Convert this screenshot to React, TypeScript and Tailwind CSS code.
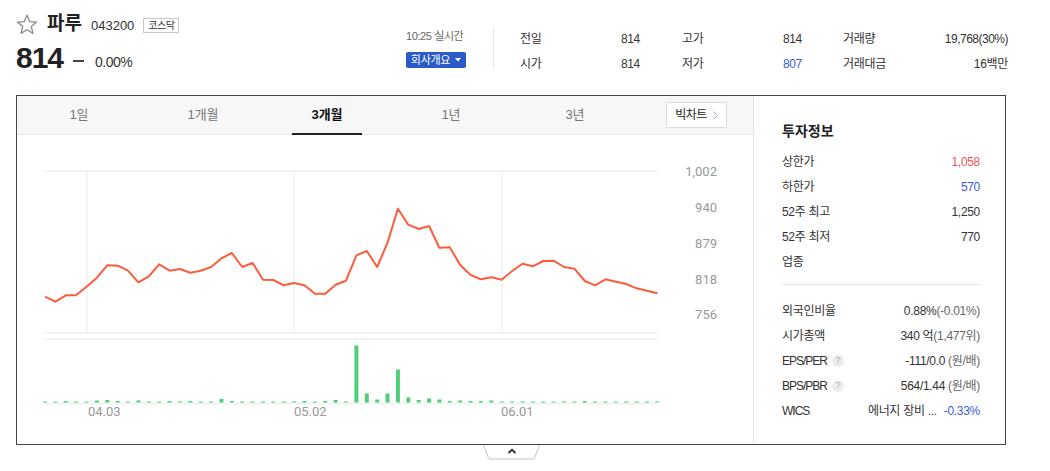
import React from "react";

const PRICE_Y = [296.7,301.7,295.3,295.3,286.7,277.7,265.3,265.7,270.7,282.3,276.3,264.3,270.7,269,272.7,270.7,267,258.3,253,267,263,279.7,280,285.3,283,285.3,293.7,293.7,284.7,280.7,255.3,251,267,242.7,208.7,224.7,229,226,247.7,247.3,265,275,279.3,277.3,279.7,271,263.7,266.3,261,260.7,267,268.7,281,285.3,279.3,281.7,284,288.3,290.7,293.3];

const VOL = [1,1,1.5,1,1,2,2.5,1.5,1,2,1,1,1.5,1,1.5,1,1,3.5,1.5,1,1,1,1,1,1,1.5,1,1.5,2.5,1,57,9,3,9,33,5,2.5,4,3,1.5,2,1.5,1.5,2,1,1,1,1,1,1,1,1,1.5,1,1,1,1,1,1,1];

function Chart() {
  const pts = PRICE_Y.map((y, i) => `${(28 + i * 10.38).toFixed(1)},${(y - 135).toFixed(1)}`).join(" ");
  return (
    <svg width="736" height="309" viewBox="0 0 736 309" className="block">
      <g stroke="#f2f2f2" strokeWidth="2" fill="none">
        <line x1="28" y1="36" x2="640" y2="36" />
        <line x1="28" y1="198" x2="640" y2="198" />
        <line x1="70" y1="36" x2="70" y2="198" strokeWidth="1.5" />
        <line x1="277" y1="36" x2="277" y2="198" strokeWidth="1.5" />
        <line x1="485" y1="36" x2="485" y2="198" strokeWidth="1.5" />
        <line x1="28" y1="204" x2="640" y2="204" />
        <line x1="28" y1="268.5" x2="640" y2="268.5" />
      </g>
      {VOL.map((h, i) => (
        <rect key={i} x={28 + i * 10.38 - 2} y={267.5 - h} width={4} height={h} fill="#4fcf7c" />
      ))}
      <polyline points={pts} fill="none" stroke="#fb5d3c" strokeWidth="2" strokeLinejoin="round" />
      <g fill="#999" fontSize="13" fontFamily="Roboto, 'Liberation Sans', sans-serif" textAnchor="end" dominantBaseline="middle">
        <text x="700" y="37.5">1,002</text>
        <text x="700" y="73.5">940</text>
        <text x="700" y="110">879</text>
        <text x="700" y="146">818</text>
        <text x="700" y="181">756</text>
      </g>
      <g fill="#999" fontSize="13" fontFamily="Roboto, 'Liberation Sans', sans-serif" dominantBaseline="middle">
        <text x="71" y="277.5">04.03</text>
        <text x="277" y="277.5">05.02</text>
        <text x="484" y="277.5">06.01</text>
      </g>
    </svg>
  );
}

function Star() {
  return (
    <svg width="22" height="21" viewBox="0 0 22 21" className="block">
      <polygon
        points="11,1.2 13.7,7.6 20.6,8.1 15.3,12.6 17,19.4 11,15.7 5,19.4 6.7,12.6 1.4,8.1 8.3,7.6"
        fill="none"
        stroke="#8a8a8a"
        strokeWidth="1.3"
        strokeLinejoin="round"
      />
    </svg>
  );
}

function Q() {
  return (
    <span className="ml-[5px] inline-flex h-[12px] w-[12px] items-center justify-center rounded-full bg-[#ececec] text-[9px] leading-none text-[#b0b0b0] tracking-normal">
      ?
    </span>
  );
}

function InfoRow({ label, children }: { label: React.ReactNode; children: React.ReactNode }) {
  return (
    <div className="flex h-[25px] items-center justify-between">
      <div className="flex items-center">{label}</div>
      <div className="flex items-center">{children}</div>
    </div>
  );
}

export default function App() {
  const tabs = ["1일", "1개월", "3개월", "1년", "3년"];
  return (
    <div className="relative h-[471px] w-[1050px] overflow-hidden bg-white font-['Liberation_Sans','Noto_Sans_CJK_KR',sans-serif] text-[#333]">
      {/* Header */}
      <div className="flex h-[95px]">
        <div className="flex w-[406px] flex-col pl-[16px] pt-[13px]">
          <div className="flex h-[22px] items-center">
            <Star />
            <span className="ml-[9px] text-[19px] font-bold leading-[22px] text-[#222]">파루</span>
            <span className="ml-[9px] pt-[3px] text-[13px] leading-none text-[#333]">043200</span>
            <span className="ml-[9px] mt-[3px] flex h-[15px] w-[36px] items-center justify-center border border-[#c8c8c8] text-[10px] leading-none tracking-[-0.5px] text-[#333]">
              코스닥
            </span>
          </div>
          <div className="mt-[6px] flex h-[34px] items-center">
            <span className="text-[30px] font-bold leading-none tracking-[-1px] text-[#222]">814</span>
            <span className="ml-[10px] mt-[6px] h-[2px] w-[11px] bg-[#444]" />
            <span className="ml-[11px] mt-[7px] text-[14px] leading-none tracking-[-0.5px] text-[#333]">0.00%</span>
          </div>
        </div>
        <div className="flex w-[87px] flex-col pt-[30px]">
          <div className="text-[11px] leading-[12px] tracking-[-0.4px] text-[#666]">10:25 실시간</div>
          <div className="mt-[10px] flex h-[16px] w-[60px] items-center justify-center gap-[5px] rounded-[2px] bg-[#2a5bc8] text-[11px] leading-none text-white">
            <span className="tracking-[-0.3px]">회사개요</span>
            <svg width="6" height="4" viewBox="0 0 6 4">
              <polygon points="0,0 6,0 3,3.5" fill="#fff" />
            </svg>
          </div>
        </div>
        <div className="mt-[29px] h-[38px] w-px self-start bg-[#e5e5e5]" />
        <div className="ml-[26px] flex flex-col pt-[26px] text-[12px] tracking-[-0.3px]">
          <div className="flex h-[25px] items-center">
            <div className="flex w-[120px] justify-between"><span>전일</span><span>814</span></div>
            <div className="ml-[42px] flex w-[120px] justify-between"><span>고가</span><span>814</span></div>
            <div className="ml-[41px] flex w-[165px] justify-between"><span>거래량</span><span className="tracking-[-0.5px]">19,768(30%)</span></div>
          </div>
          <div className="flex h-[25px] items-center">
            <div className="flex w-[120px] justify-between"><span>시가</span><span>814</span></div>
            <div className="ml-[42px] flex w-[120px] justify-between"><span>저가</span><span className="text-[#3a5bd9]">807</span></div>
            <div className="ml-[41px] flex w-[165px] justify-between"><span>거래대금</span><span>16백만</span></div>
          </div>
        </div>
      </div>

      {/* Chart box */}
      <div className="ml-[16px] flex h-[350px] w-[990px] border border-[#444]">
        <div className="flex w-[736px] flex-col">
          <div className="flex h-[39px] items-stretch border-b border-[#e6e6e6] bg-[#f7f7f7]">
            {tabs.map((t) => {
              const active = t === "3개월";
              return (
                <div
                  key={t}
                  className={
                    active
                      ? "relative flex w-[124px] items-center justify-center text-[13px] font-bold text-[#111]"
                      : "relative flex w-[124px] items-center justify-center text-[13px] text-[#777]"
                  }
                >
                  {t}
                  {active && <span className="absolute bottom-[-1px] left-[27px] h-[2px] w-[70px] bg-[#222]" />}
                </div>
              );
            })}
            <div className="ml-[29px] flex h-[26px] w-[61px] items-center justify-center gap-[6px] self-center border border-[#ddd] bg-white text-[12px] tracking-[-0.5px] text-[#222]">
              <span>빅차트</span>
              <svg width="5" height="9" viewBox="0 0 5 9">
                <polyline points="0.5,0.5 4.5,4.5 0.5,8.5" fill="none" stroke="#aaa" strokeWidth="1" />
              </svg>
            </div>
          </div>
          <Chart />
        </div>
        <div className="flex flex-1 flex-col border-l border-[#e6e6e6] pl-[28px] pr-[25px] pt-[25px] text-[12px] tracking-[-0.3px]">
          <div className="h-[20px] text-[14px] font-bold leading-[20px] tracking-normal text-[#222]">투자정보</div>
          <div className="mt-[8px] flex flex-col">
            <InfoRow label="상한가"><span className="text-[#f25454]">1,058</span></InfoRow>
            <InfoRow label="하한가"><span className="text-[#3a5bd9]">570</span></InfoRow>
            <InfoRow label="52주 최고"><span>1,250</span></InfoRow>
            <InfoRow label="52주 최저"><span>770</span></InfoRow>
            <InfoRow label="업종"><span /></InfoRow>
          </div>
          <div className="mt-[10px] h-px bg-[#e5e5e5]" />
          <div className="mt-[13px] flex flex-col">
            <InfoRow label="외국인비율">
              <span>0.88%</span>
              <span className="text-[#666]">(-0.01%)</span>
            </InfoRow>
            <InfoRow label="시가총액">
              <span>340 억</span>
              <span className="text-[#666]">(1,477위)</span>
            </InfoRow>
            <InfoRow label={<><span className="tracking-[-1px]">EPS/PER</span><Q /></>}>
              <span>-111/0.0</span>
              <span className="ml-[3px] text-[#666]">(원/배)</span>
            </InfoRow>
            <InfoRow label={<><span className="tracking-[-1px]">BPS/PBR</span><Q /></>}>
              <span>564/1.44</span>
              <span className="ml-[3px] text-[#666]">(원/배)</span>
            </InfoRow>
            <InfoRow label={<span className="tracking-[-1px]">WICS</span>}>
              <span>에너지 장비 ...</span>
              <span className="ml-[7px] text-[#3a5bd9]">-0.33%</span>
            </InfoRow>
          </div>
        </div>
      </div>

      {/* Collapse handle */}
      <div className="ml-[16px] flex w-[990px] justify-center">
        <svg width="57" height="15" viewBox="0 0 57 15" className="block">
          <path d="M0.5 0 L5.5 13 Q6 14 7.5 14 H49.5 Q51 14 51.5 13 L56.5 0" fill="#fff" stroke="#c4c4c4" strokeWidth="1" />
          <polyline points="25.5,8 29,4.8 32.5,8" fill="none" stroke="#333" strokeWidth="2" />
        </svg>
      </div>
    </div>
  );
}
